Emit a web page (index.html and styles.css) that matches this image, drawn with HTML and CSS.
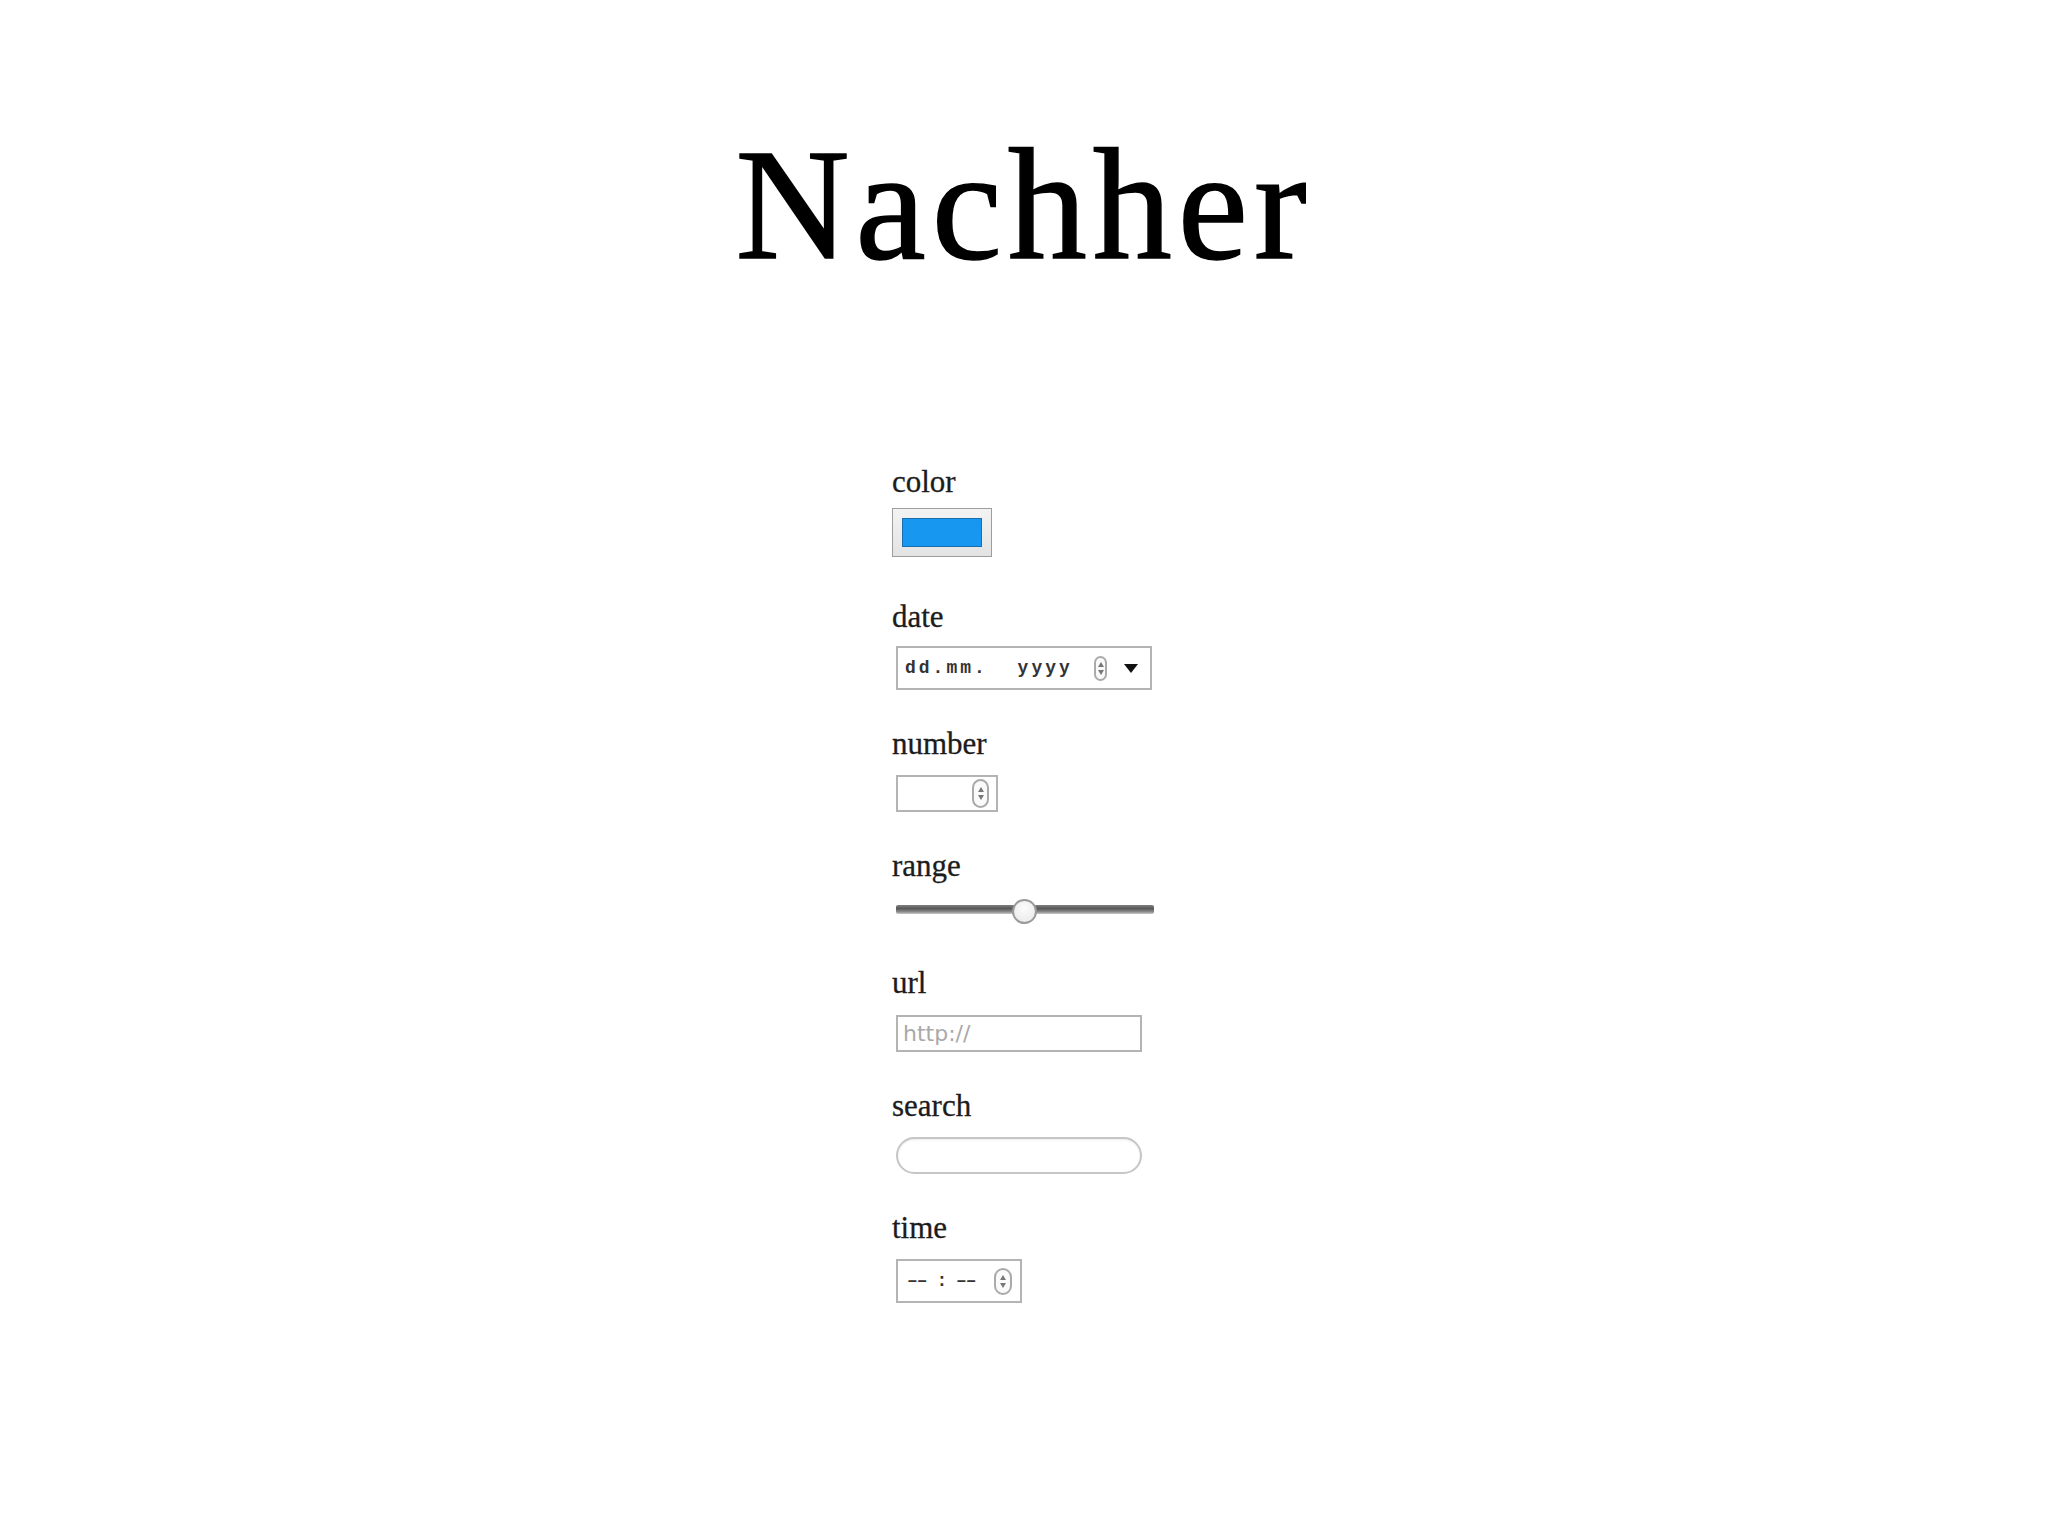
FILE: index.html
```
<!DOCTYPE html>
<html lang="de">
<head>
    <meta charset="UTF-8">
    <title>Nachher</title>
    <link rel="stylesheet" href="styles.css">
</head>
<body>

    <div class="slide">
        <h1 class="title">Nachher</h1>

        <!--Formularfelder-->
        <div class="fields">
            <div class="field">
                <label>color</label>
                <div class="color-box"><span class="swatch"></span></div>
            </div>

            <div class="field">
                <label>date</label>
                <div class="box date-box">
                    <span class="mono date-text">dd.mm. yyyy</span>
                    <span class="spin"><i class="up"></i><i class="down"></i></span>
                    <span class="drop"></span>
                </div>
            </div>

            <div class="field">
                <label>number</label>
                <div class="box number-box">
                    <span class="spin"><i class="up"></i><i class="down"></i></span>
                </div>
            </div>

            <div class="field">
                <label>range</label>
                <div class="range">
                    <div class="track"></div>
                    <div class="thumb"></div>
                </div>
            </div>

            <div class="field">
                <label>url</label>
                <div class="box url-box"><span class="placeholder">http://</span></div>
            </div>

            <div class="field">
                <label>search</label>
                <div class="box search-box"></div>
            </div>

            <div class="field">
                <label>time</label>
                <div class="box time-box">
                    <span class="mono time-text">–– : ––</span>
                    <span class="spin"><i class="up"></i><i class="down"></i></span>
                </div>
            </div>
        </div>
    </div>

</body>
</html>
```

FILE: styles.css
```
*{margin:0;padding:0;box-sizing:border-box;}

body{
    background: #fff;
    font-family: "Liberation Serif", "Times New Roman", serif;
}

.slide{
    width: 2048px;
    padding-top: 126px;
}

.title{
    font-size: 158px;
    line-height: 158px;
    font-weight: normal;
    letter-spacing: 6px;
    text-align: center;
    color: #000;
    -webkit-text-stroke: 1.5px #000;
}

/*Formular*/
.fields{
    display: flex;
    flex-direction: column;
    gap: 36px;
    margin: 180px 0 0 892px;
}
.field{
    display: flex;
    flex-direction: column;
    align-items: flex-start;
}
.field label{
    font-size: 31px;
    line-height: 36px;
    color: #1c1c1c;
    -webkit-text-stroke: .3px #1c1c1c;
    margin-bottom: 13px;
}

.box{
    display: flex;
    align-items: center;
    margin-left: 4px;
    background: #fff;
    border: 2px solid #b4b4b4;
}

.mono{
    font-family: "Liberation Mono", "Courier New", monospace;
    color: #333;
    white-space: pre;
}

/*color*/
.color-box{
    width: 100px;
    height: 49px;
    margin: -5px 0 6px;
    padding: 9px;
    border: 1px solid #9d9d9d;
    background: linear-gradient(#f3f3f3, #e3e3e3);
}
.color-box .swatch{
    display: block;
    width: 80px;
    height: 29px;
    background: #1897f0;
    box-shadow: inset 0 0 0 1px rgba(30,60,90,.45);
}

/*date*/
.date-box{
    width: 256px;
    height: 44px;
    margin-top: -2px;
    padding: 0 12px 0 7px;
}
.date-text{
    font-size: 18px;
    font-weight: bold;
    letter-spacing: 3px;
    word-spacing: 16px;
}
.date-box .spin{
    margin-left: auto;
    width: 13px;
    height: 25px;
}
.drop{
    margin-left: 17px;
    width: 0;
    height: 0;
    border-left: 7px solid transparent;
    border-right: 7px solid transparent;
    border-top: 9px solid #111;
}

/*Spinner*/
.spin{
    display: flex;
    flex-direction: column;
    align-items: center;
    justify-content: center;
    gap: 3px;
    border: 2px solid #aaa;
    border-radius: 9px;
    background: #fafafa;
}
.spin i{
    width: 0;
    height: 0;
    border-left: 3px solid transparent;
    border-right: 3px solid transparent;
}
.spin i.up{
    border-bottom: 5px solid #777;
}
.spin i.down{
    border-top: 5px solid #777;
}

/*number*/
.number-box{
    width: 102px;
    height: 37px;
    justify-content: flex-end;
    padding-right: 7px;
}
.number-box .spin{
    width: 17px;
    height: 29px;
}

/*range*/
.range{
    position: relative;
    width: 258px;
    height: 26px;
    margin: 1px 0 5px 4px;
}
.range .track{
    margin-top: 7px;
    height: 9px;
    border-radius: 2px;
    background: linear-gradient(#808080, #585858 40%, #8c8c8c 75%, #c8c8c8);
}
.range .thumb{
    position: absolute;
    left: 116px;
    top: 1px;
    width: 25px;
    height: 25px;
    border-radius: 50%;
    border: 2px solid #9a9a9a;
    background: radial-gradient(circle at 50% 35%, #fcfcfc, #e7e7e7);
}

/*url*/
.url-box{
    width: 246px;
    height: 37px;
    margin-top: 1px;
    padding-left: 5px;
}
.placeholder{
    font-family: "DejaVu Sans", Verdana, sans-serif;
    font-size: 22px;
    line-height: 33px;
    color: #a9a9a9;
}

/*search*/
.search-box{
    width: 246px;
    height: 37px;
    border-color: #c6c6c6;
    border-radius: 19px;
    box-shadow: inset 0 1px 2px rgba(0,0,0,.08);
}

/*time*/
.time-box{
    width: 126px;
    height: 44px;
    padding: 0 8px 0 9px;
}
.time-text{
    font-size: 18px;
    font-weight: bold;
    letter-spacing: -1px;
}
.time-box .spin{
    margin-left: auto;
    width: 18px;
    height: 27px;
}
```
